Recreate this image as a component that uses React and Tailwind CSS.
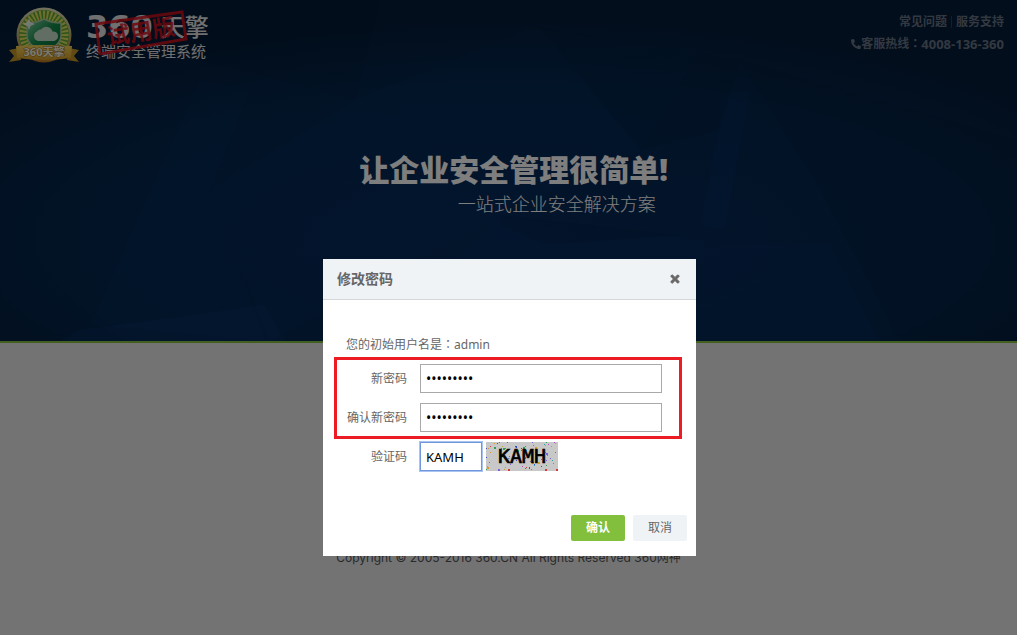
import React, { useState } from 'react';
import { FaPhone, FaTimes } from 'react-icons/fa';

const RAYS = Array.from({ length: 36 }, (_, i) => i * 10);

const NOISE_COLORS = ['#d33a3a', '#2e9e4f', '#3a49c9', '#b34fd0', '#d59a2c', '#29a7a7', '#7f5fe0'];

// Seeded dots for the captcha background, so they stay put between renders
const makeNoise = (count) => {
  let seed = 2016;
  const next = (max) => {
    seed = (seed * 16807) % 2147483647;
    return seed % max;
  };
  return Array.from({ length: count }, () => ({
    x: next(71),
    y: next(28),
    size: next(4) === 0 ? 2 : 1,
    color: NOISE_COLORS[next(NOISE_COLORS.length)],
  }));
};

const NOISE = makeNoise(85);

const Emblem = () => (
  <svg className="h-14 w-[70px] shrink-0" viewBox="0 0 70 56" aria-hidden="true">
    <defs>
      <linearGradient id="gold" x1="0" y1="0" x2="0" y2="1">
        <stop offset="0" stopColor="#e2e2b8" />
        <stop offset="0.5" stopColor="#b9b072" />
        <stop offset="1" stopColor="#c07a20" />
      </linearGradient>
      <linearGradient id="ribbon" x1="0" y1="0" x2="0" y2="1">
        <stop offset="0" stopColor="#f3d35a" />
        <stop offset="1" stopColor="#d49b26" />
      </linearGradient>
      <linearGradient id="shield" x1="0" y1="0" x2="1" y2="1">
        <stop offset="0" stopColor="#7fd0a0" />
        <stop offset="0.5" stopColor="#138a4a" />
        <stop offset="1" stopColor="#0b6b3a" />
      </linearGradient>
    </defs>
    <circle cx="35" cy="28" r="27.5" fill="url(#gold)" />
    <circle cx="35" cy="28" r="25" fill="#5aa636" />
    {RAYS.map((deg) => (
      <path key={deg} d="M35 28 L33.800 3.500 L36.200 3.500 Z" fill="#dcdc5c" transform={`rotate(${deg} 35 28)`} />
    ))}
    <path d="M35 12 C30 15 24 16 18 16 L18 28 C18 37 26 41 35 44 C44 41 52 37 52 28 L52 16 C46 16 40 15 35 12 Z" fill="url(#shield)" stroke="#a8c8a0" strokeWidth="1.5" />
    <path d="M29 34 a5 5 0 0 1 -1 -9.500 a4 4 0 0 1 4 -2 a6.500 6.500 0 0 1 11.500 2 a4.500 4.500 0 0 1 1.500 9.500 Z" fill="#c4dcc6" />
    <path d="M20 11 L21.500 15 L26 17 L21.500 19 L20 23 L18.500 19 L14 17 L18.500 15 Z" fill="#ffffff" opacity="0.8" />
    <path d="M0 43 L10 41 L12 53 L0 55 L5 49 Z M70 43 L60 41 L58 53 L70 55 L65 49 Z" fill="#c39228" />
    <path d="M7 39 Q35 37 63 39 L62 51 Q35 55 8 51 Z" fill="url(#ribbon)" />
    <text x="35" y="49" textAnchor="middle" fontSize="11" fontWeight="700" fill="#f7f1dc" stroke="#8d6a24" strokeWidth="1" paintOrder="stroke">
      360天擎
    </text>
  </svg>
);

const Stamp = () => (
  <svg className="absolute left-2 top-0 h-12 w-24" viewBox="0 0 96 48" aria-hidden="true">
    <g opacity="0.85">
      <path d="M2 17 L88 5 L92 32 L6 47 Z" fill="none" stroke="#d8101c" strokeWidth="3" />
      <text x="47" y="33" textAnchor="middle" fontSize="23" fontWeight="700" fill="#d8101c" transform="rotate(-9 47 26)">
        试用版
      </text>
    </g>
  </svg>
);

const Backdrop = () => (
  <svg className="absolute inset-0 h-full w-full" viewBox="0 0 1017 341" preserveAspectRatio="none" aria-hidden="true">
    <defs>
      <radialGradient id="glow" cx="0.5" cy="0.7" r="0.65">
        <stop offset="0" stopColor="#062a58" />
        <stop offset="0.7" stopColor="#05264d" />
        <stop offset="1" stopColor="#041c38" />
      </radialGradient>
    </defs>
    <rect width="1017" height="341" fill="url(#glow)" />
    <g fill="#0a3c80">
      <path d="M355 100 L530 28 L700 52 L640 150 L500 215 L270 341 L210 190 Z" opacity="0.08" />
      <path d="M500 215 L700 240 L830 245 L880 341 L370 341 Z" opacity="0.1" />
      <path d="M200 80 L250 90 L210 190 L265 341 L90 325 Z" opacity="0.08" />
      <path d="M725 95 L750 90 L725 230 L700 225 Z" opacity="0.12" />
      <path d="M80 330 L265 305 L285 341 L60 341 Z" opacity="0.2" />
    </g>
    <g fill="#02101f">
      <path d="M355 100 L200 60 L0 30 L0 0 L380 0 Z" opacity="0.08" />
      <path d="M540 28 L740 60 L720 130 L640 150 Z" opacity="0.1" />
      <path d="M740 60 L1017 140 L1017 341 L900 341 L820 190 Z" opacity="0.1" />
      <path d="M500 215 L680 235 L545 245 L500 225 Z" opacity="0.1" />
    </g>
  </svg>
);

const Captcha = () => (
  <svg className="h-[29px] w-[72px]" viewBox="0 0 72 29" role="img" aria-label="KAMH">
    <rect width="72" height="29" fill="#c8c8c8" />
    {NOISE.map((dot, i) => (
      <rect key={i} x={dot.x} y={dot.y} width={dot.size} height={dot.size} fill={dot.color} />
    ))}
    <text x="36" y="21" textAnchor="middle" fontFamily="DejaVu Sans Mono" fontSize="20" fill="#000000" stroke="#000000" strokeWidth="0.7">
      KAMH
    </text>
  </svg>
);

// Colon centred in its full-width cell
const Colon = () => <span className="font-['Noto_Sans_CJK_TC',sans-serif] leading-none">：</span>;

const PasswordRow = ({ id, label, value, onChange }) => (
  <div className="flex items-center gap-[13px]">
    <label htmlFor={id} className="w-[70px] text-right">{label}</label>
    <input
      id={id}
      type="password"
      value={value}
      onChange={(e) => onChange(e.target.value)}
      className="h-[29px] w-[242px] border border-[#a9a9a9] bg-white px-[5px] text-sm text-black outline-none"
    />
  </div>
);

const PasswordDialog = () => {
  const [password, setPassword] = useState('admin1234');
  const [confirm, setConfirm] = useState('admin1234');
  const [code, setCode] = useState('KAMH');

  return (
    <form role="dialog" aria-labelledby="dialog-title" className="w-[373px] bg-white text-xs text-[#666]" onSubmit={(e) => e.preventDefault()}>
      <div className="flex h-[41px] items-center justify-between border-b border-[#d4d6d8] bg-[#eff3f6] pl-[14px] pr-[15px]">
        <h2 id="dialog-title" className="text-sm font-bold">修改密码</h2>
        <button type="button" aria-label="关闭" className="text-[#666]">
          <FaTimes className="h-3 w-3 stroke-current stroke-[40px]" />
        </button>
      </div>

      <p className="mt-9 pl-[23px] leading-[18px]">
        您的初始用户名是<Colon />admin
      </p>

      <div className="ml-[11px] mr-[14px] mt-[3px] flex flex-col gap-2.5 border-3 border-[#ed1c24] py-1">
        <PasswordRow id="password" label="新密码" value={password} onChange={setPassword} />
        <PasswordRow id="confirm" label="确认新密码" value={confirm} onChange={setConfirm} />
      </div>

      <div className="ml-[14px] mt-[3px] flex items-center gap-[13px]">
        <label htmlFor="code" className="w-[70px] text-right">验证码</label>
        <div className="flex items-center gap-1">
          <input
            id="code"
            type="text"
            value={code}
            onChange={(e) => setCode(e.target.value)}
            className="h-[29px] w-[62px] border border-[#6f98dc] bg-white px-[5px] text-[13px] text-black ring-1 ring-[#a9c4f2] outline-none"
          />
          <Captcha />
        </div>
      </div>

      <div className="mt-11 flex justify-end gap-2 pb-[15px] pr-[9px]">
        <button type="submit" className="h-[26px] w-[54px] rounded-xs bg-[#82bf3c] font-bold text-white">确认</button>
        <button type="button" className="h-[26px] w-[54px] rounded-xs bg-[#eff3f6]">取消</button>
      </div>
    </form>
  );
};

const App = () => (
  <div className="flex min-h-screen flex-col bg-[#e6e7e9] font-['Noto_Sans','Noto_Sans_CJK_SC',sans-serif]">
    <div className="relative border-b-2 border-[#82bf3c] bg-[#06274f]">
      <Backdrop />
      <div className="relative flex min-h-[341px] flex-col">
        <header className="flex items-start justify-between pl-[9px] pr-[13px] pt-[7px]">
          <div className="flex items-start gap-[7px]">
            <Emblem />
            <div className="relative pt-1 text-[#e0e0e0]">
              <div className="flex items-center gap-2 leading-7">
                <span className="font-['DejaVu_Sans',sans-serif] text-[32px] font-bold">360</span>
                <span className="text-2xl font-medium">天擎</span>
              </div>
              <div className="text-[15px] leading-4">终端安全管理系统</div>
              <Stamp />
            </div>
          </div>
          <div className="flex flex-col items-end pt-1 text-xs font-bold leading-[22px] text-[#667282]">
            <nav className="flex items-center gap-1">
              <a href="#faq">常见问题</a>
              <span className="h-3 w-px bg-[#2b3a50]" />
              <a href="#support">服务支持</a>
            </nav>
            <div className="flex items-center">
              <FaPhone className="h-2.5 w-2.5 -scale-x-100" />
              <span>客服热线<Colon /></span>
              <span className="text-[13px] leading-[22px]">4008-136-360</span>
            </div>
          </div>
        </header>

        <div className="mx-auto mt-[86px] pl-2.5 text-right text-[#fdfdfd]">
          <h1 className="text-[30px] font-black leading-[42px]">让企业安全管理很简单!</h1>
          <p className="pr-3 text-lg font-light leading-[26px]">一站式企业安全解决方案</p>
        </div>
      </div>
    </div>

    <footer className="mt-auto pb-[68px] text-center font-['Inter','Noto_Sans_CJK_SC',sans-serif] text-xs leading-[18px] text-[#555]">
      Copyright © 2005-2016 360.CN All Rights Reserved 360网神
    </footer>

    <div className="fixed inset-0 flex items-start justify-center bg-black/50 pl-0.5 pt-[259px]">
      <PasswordDialog />
    </div>
  </div>
);

export default App;
